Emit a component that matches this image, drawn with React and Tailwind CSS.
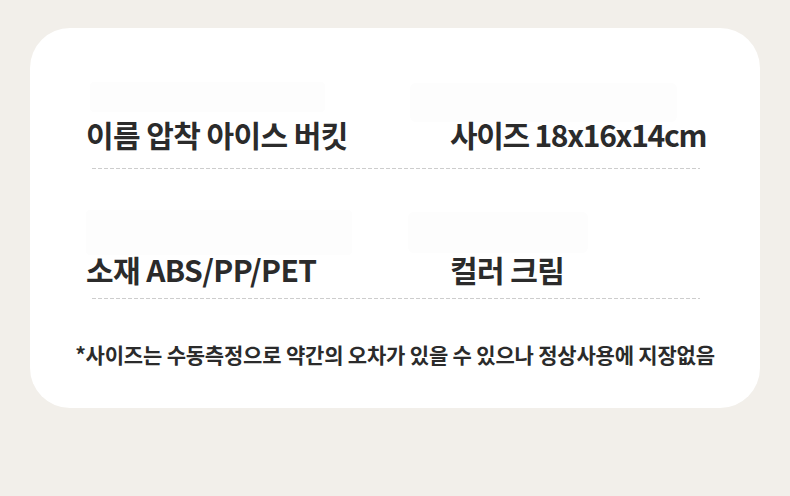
import React from 'react';

const font = { fontFamily: '"Noto Sans CJK KR", "Noto Sans", sans-serif' };

function Dashed() {
  return (
    <div className="ml-[6px] h-px w-[608px] bg-[repeating-linear-gradient(90deg,#cdcdcd_0_4px,transparent_4px_6px)]" />
  );
}

function Cell({ ghost, tight, children }) {
  return (
    <div className="flex h-full flex-col justify-between">
      <div className={ghost} />
      <div
        className={
          tight
            ? 'text-[30px] font-bold leading-[36px] tracking-[-1.3px] text-[#2b2b2b] whitespace-nowrap'
            : 'text-[30px] font-bold leading-[36px] tracking-[-0.6px] text-[#2b2b2b] whitespace-nowrap'
        }
      >
        {children}
      </div>
    </div>
  );
}

export default function App() {
  return (
    <div className="min-h-[496px] w-full bg-[#f2efea] pt-[28px]" style={font}>
      <div className="mx-[30px] h-[380px] rounded-[40px] bg-white pt-[54px]">
        <div className="pl-[56px]">
          <div className="grid h-[70px] grid-cols-[364px_1fr]">
            <Cell ghost="ml-[4px] h-[30px] w-[235px] rounded-sm bg-[#fdfdfd]">이름 압착 아이스 버킷</Cell>
            <Cell tight ghost="ml-[-40px] mt-[1px] mb-[-6px] h-[39px] w-[267px] rounded-md bg-[#fdfdfd]">사이즈 18x16x14cm</Cell>
          </div>
          <div className="mt-[16px]">
            <Dashed />
          </div>
          <div className="mt-[41px] grid h-[77px] grid-cols-[364px_1fr]">
            <Cell ghost="mb-[-4px] h-[45px] w-[266px] rounded-sm bg-[#fdfdfd]">소재 ABS/PP/PET</Cell>
            <Cell ghost="ml-[-42px] mt-[2px] mb-[-4px] h-[41px] w-[180px] rounded-md bg-[#fdfdfd]">컬러 크림</Cell>
          </div>
          <div className="mt-[11px]">
            <Dashed />
          </div>
        </div>
        <div className="mt-[42px] text-center text-[21px] font-bold leading-[26px] tracking-[-0.2px] text-[#2b2b2b] whitespace-nowrap">
          *사이즈는 수동측정으로 약간의 오차가 있을 수 있으나 정상사용에 지장없음
        </div>
      </div>
    </div>
  );
}
